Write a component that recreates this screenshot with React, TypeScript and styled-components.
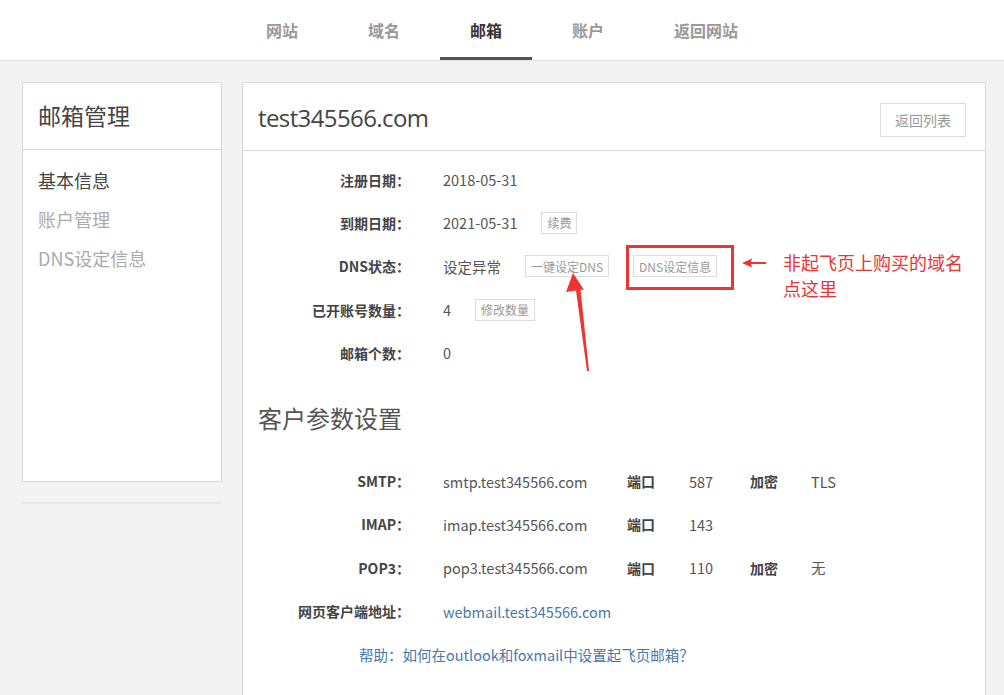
import styled, { createGlobalStyle } from 'styled-components';

const GlobalStyle = createGlobalStyle`
  * { box-sizing: border-box; }
  body {
    margin: 0;
    background: #f3f3f3;
    font-family: "Noto Sans CJK SC", "Noto Sans", sans-serif;
    color: #555;
  }
`;

const navItems = ['网站', '域名', '邮箱', '账户', '返回网站'];

const infoRows = [
  { label: '注册日期：', value: '2018-05-31' },
  { label: '到期日期：', value: '2021-05-31', buttons: ['续费'] },
  { label: 'DNS状态：', value: '设定异常', buttons: ['一键设定DNS', 'DNS设定信息'] },
  { label: '已开账号数量：', value: '4', buttons: ['修改数量'] },
  { label: '邮箱个数：', value: '0' },
];

const paramRows = [
  { label: 'SMTP：', host: 'smtp.test345566.com', port: '587', enc: 'TLS' },
  { label: 'IMAP：', host: 'imap.test345566.com', port: '143' },
  { label: 'POP3：', host: 'pop3.test345566.com', port: '110', enc: '无' },
];

const App = () => {
  return (
    <>
      <GlobalStyle />
      <TopBar>
        <Nav>
          {navItems.map((item) => (
            <NavItem key={item} $active={item === '邮箱'}>
              {item}
            </NavItem>
          ))}
        </Nav>
      </TopBar>
      <Body>
        <SideCol>
          <SideBox>
            <SideTitle>邮箱管理</SideTitle>
            <SideList>
              <SideItem $active>基本信息</SideItem>
              <SideItem>账户管理</SideItem>
              <SideItem>DNS设定信息</SideItem>
            </SideList>
          </SideBox>
          <SideRule />
        </SideCol>
        <Main>
          <MainHead>
            <MainTitle>test345566.com</MainTitle>
            <BackButton>返回列表</BackButton>
          </MainHead>
          <InfoList>
            {infoRows.map((row) => (
              <InfoRow key={row.label}>
                <Label>{row.label}</Label>
                <Value>
                  {row.value}
                  {row.buttons?.map((b) => (
                    <SmallButton key={b}>{b}</SmallButton>
                  ))}
                </Value>
              </InfoRow>
            ))}
          </InfoList>
          <SectionTitle>客户参数设置</SectionTitle>
          <ParamList>
            {paramRows.map((row) => (
              <ParamRow key={row.label}>
                <Label>{row.label}</Label>
                <Value>{row.host}</Value>
                <Label $left>端口</Label>
                <Value>{row.port}</Value>
                {row.enc && (
                  <>
                    <Label $left>加密</Label>
                    <Value>{row.enc}</Value>
                  </>
                )}
              </ParamRow>
            ))}
            <ParamRow>
              <Label>网页客户端地址：</Label>
              <LinkText>webmail.test345566.com</LinkText>
            </ParamRow>
            <HelpRow>
              <LinkText>帮助：如何在outlook和foxmail中设置起飞页邮箱？</LinkText>
            </HelpRow>
          </ParamList>

          <RedBox />
          <Overlay width="744" height="320" viewBox="0 0 744 320">
            <path d="M330 190 L341 207 L337.5 206.5 L346 288 L344 288 L333 207.5 L323 209 Z" fill="#ee3333" />
            <path d="M499 180 L509 175.5 L508 179 L523 179 L523 181 L508 181 L509 184.5 Z" fill="#ee3333" />
          </Overlay>
          <Note>
            非起飞页上购买的域名
            <br />
            点这里
          </Note>
        </Main>
      </Body>
    </>
  );
};

const TopBar = styled.header`
  height: 61px;
  background: #fff;
  border-bottom: 1px solid #e3e3e3;
`;
const Nav = styled.nav`
  display: flex;
  justify-content: center;
  gap: 10px;
  height: 100%;
`;
const NavItem = styled.a<{ $active?: boolean }>`
  display: flex;
  align-items: center;
  padding: 3px 30px 0;
  font-size: 16px;
  font-weight: 700;
  color: ${(p) => (p.$active ? '#333' : '#999')};
  border-bottom: 3px solid ${(p) => (p.$active ? '#555' : 'transparent')};
  cursor: pointer;
`;
const Body = styled.div`
  display: flex;
  align-items: flex-start;
  gap: 20px;
  padding: 21px 18px 0 22px;
`;
const SideCol = styled.aside`
  width: 200px;
  flex-shrink: 0;
`;
const SideBox = styled.div`
  height: 400px;
  background: #fff;
  border: 1px solid #d8d8d8;
`;
const SideTitle = styled.h2`
  margin: 0;
  height: 67px;
  line-height: 64px;
  padding-left: 15px;
  font-size: 23px;
  font-weight: 400;
  color: #444;
  border-bottom: 1px solid #d8d8d8;
`;
const SideList = styled.ul`
  list-style: none;
  margin: 0;
  padding: 11px 0 0 15px;
`;
const SideItem = styled.li<{ $active?: boolean }>`
  font-size: 18px;
  line-height: 39px;
  color: ${(p) => (p.$active ? '#444' : '#aaa')};
`;
const SideRule = styled.div`
  margin-top: 20px;
  height: 2px;
  background: #e8e8e8;
`;
const Main = styled.main`
  position: relative;
  width: 744px;
  flex-shrink: 0;
  min-height: 640px;
  background: #fff;
  border: 1px solid #d8d8d8;
  padding-bottom: 40px;
`;
const MainHead = styled.div`
  display: flex;
  align-items: center;
  justify-content: space-between;
  height: 68px;
  padding: 0 19px 0 15px;
  border-bottom: 1px solid #d8d8d8;
`;
const MainTitle = styled.h1`
  margin: 0;
  font-size: 24px;
  font-weight: 400;
  color: #444;
  font-family: "Open Sans", "Noto Sans CJK SC", sans-serif;
  letter-spacing: -0.6px;
  padding-top: 2px;
`;
const BackButton = styled.button`
  width: 86px;
  height: 34px;
  margin-top: 7px;
  background: #fff;
  border: 1px solid #ddd;
  color: #999;
  font-family: inherit;
  font-size: 14px;
`;
const InfoList = styled.div`
  padding-top: 7px;
`;
const InfoRow = styled.div`
  display: grid;
  grid-template-columns: 200px 1fr;
  align-items: center;
  height: 43.3px;
`;
const Label = styled.span<{ $left?: boolean }>`
  font-size: 14px;
  font-weight: 700;
  color: #444;
  text-align: ${(p) => (p.$left ? 'left' : 'right')};
  padding-right: ${(p) => (p.$left ? '0' : '33px')};
  white-space: nowrap;
`;
const Value = styled.span`
  display: flex;
  align-items: center;
  font-size: 14.5px;
  color: #555;
  white-space: nowrap;
`;
const SmallButton = styled.button`
  margin-left: 24px;
  height: 22px;
  padding: 0 5px;
  background: #fff;
  border: 1px solid #ddd;
  color: #999;
  font-family: inherit;
  font-size: 12px;
`;
const SectionTitle = styled.h2`
  margin: 27px 0 0 15px;
  font-size: 24px;
  font-weight: 400;
  color: #555;
  line-height: 34px;
`;
const ParamList = styled.div`
  padding-top: 24px;
`;
const ParamRow = styled.div`
  display: grid;
  grid-template-columns: 200px 184px 62px 61px 61px 1fr;
  align-items: center;
  height: 43.3px;
`;
const LinkText = styled.a`
  font-size: 14.5px;
  color: #4a78a6;
  white-space: nowrap;
  cursor: pointer;
`;
const HelpRow = styled.div`
  display: flex;
  align-items: center;
  height: 43.3px;
  padding-left: 116px;
`;
const RedBox = styled.div`
  position: absolute;
  left: 383px;
  top: 162px;
  width: 108px;
  height: 45px;
  border: 3px solid #e83535;
  pointer-events: none;
`;
const Overlay = styled.svg`
  position: absolute;
  left: 0;
  top: 0;
  pointer-events: none;
`;
const Note = styled.div`
  position: absolute;
  left: 540px;
  top: 166px;
  font-size: 18px;
  line-height: 26px;
  color: #e83535;
`;

export default App;
